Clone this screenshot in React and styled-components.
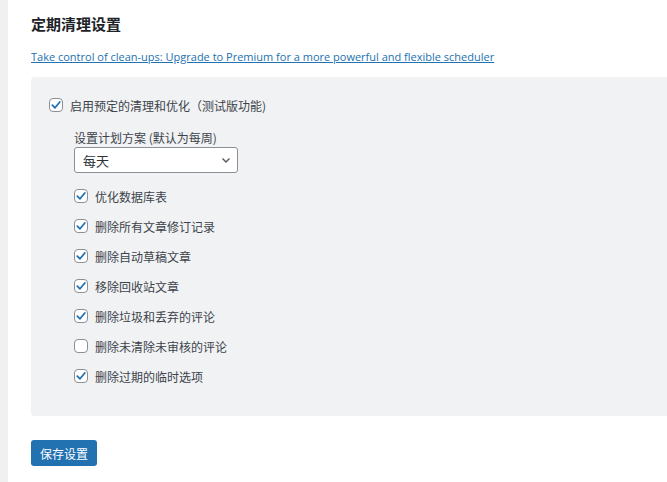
import React from 'react';
import styled, { createGlobalStyle } from 'styled-components';

const Global = createGlobalStyle`
  body {
    margin: 0;
    background: #fff;
    font-family: "Open Sans", "Noto Sans CJK SC", sans-serif;
    color: #3c434a;
  }
`;

const Page = styled.div`
  display: flex;
  min-height: 482px;
  width: 667px;
  overflow: hidden;
`;

const Strip = styled.div`
  width: 8px;
  flex-shrink: 0;
  background: #f0f0f1;
`;

const Content = styled.div`
  flex: 1;
  padding: 13px 0 0 23px;
`;

const Title = styled.h2`
  margin: 0;
  font-size: 15px;
  font-weight: 700;
  color: #1d2327;
  line-height: 22px;
  font-family: "Noto Sans CJK SC", sans-serif;
`;

const Upgrade = styled.a`
  display: inline-block;
  margin-top: 13px;
  font-size: 11px;
  line-height: 18px;
  color: #2271b1;
  text-decoration: underline;
  font-family: "Open Sans", sans-serif;
`;

const Panel = styled.div`
  margin-top: 11px;
  width: 700px;
  height: 339px;
  box-sizing: border-box;
  background: #f1f2f4;
  border-radius: 4px 0 0 4px;
  padding: 20px 0 0 18px;
`;

const Row = styled.label`
  display: flex;
  align-items: center;
  gap: 7px;
  height: ${p => p.$h || 30}px;
  font-size: 12px;
  color: #3c434a;
  font-family: "Noto Sans CJK SC", sans-serif;
`;

const Box = styled.span`
  width: 14px;
  height: 14px;
  box-sizing: border-box;
  border: 1px solid #8c8f94;
  border-radius: 4px;
  background: #fff;
  display: flex;
  align-items: center;
  justify-content: center;
  flex-shrink: 0;
`;

const Sub = styled.div`
  padding-left: 25px;
  margin-top: 18px;
`;

const FieldLabel = styled.div`
  font-size: 12px;
  line-height: 14px;
  color: #3c434a;
  font-family: "Noto Sans CJK SC", sans-serif;
`;

const Select = styled.div`
  margin-top: 2px;
  margin-bottom: 8px;
  width: 164px;
  height: 26px;
  box-sizing: border-box;
  border: 1px solid #8c8f94;
  border-radius: 3px;
  background: #fff;
  display: flex;
  align-items: center;
  justify-content: space-between;
  padding: 0 5px 0 8px;
  font-size: 13px;
  color: #2c3338;
  font-family: "Noto Sans CJK SC", sans-serif;
`;

const SaveButton = styled.button`
  margin-top: 24px;
  height: 26px;
  padding: 0 9px;
  border: none;
  border-radius: 3px;
  background: #2271b1;
  color: #fff;
  font-size: 12px;
  font-family: "Noto Sans CJK SC", sans-serif;
`;

const Check = ({ on }) => (
  <Box>
    {on && (
      <svg width="12" height="12" viewBox="0 0 12 12">
        <path d="M2.3 6.2 L5 8.8 L9.8 3" fill="none" stroke="#2271b1" strokeWidth="1.8" strokeLinecap="round" strokeLinejoin="round" />
      </svg>
    )}
  </Box>
);

const options = [
  ['优化数据库表', true],
  ['删除所有文章修订记录', true],
  ['删除自动草稿文章', true],
  ['移除回收站文章', true],
  ['删除垃圾和丢弃的评论', true],
  ['删除未清除未审核的评论', false],
  ['删除过期的临时选项', true],
];

export default function App() {
  return (
    <>
      <Global />
      <Page>
        <Strip />
        <Content>
          <Title>定期清理设置</Title>
          <Upgrade href="#">Take control of clean-ups: Upgrade to Premium for a more powerful and flexible scheduler</Upgrade>
          <Panel>
            <Row $h={16}>
              <Check on />
              启用预定的清理和优化（测试版功能)
            </Row>
            <Sub>
              <FieldLabel>设置计划方案 (默认为每周)</FieldLabel>
              <Select>
                每天
                <svg width="12" height="12" viewBox="0 0 12 12">
                  <path d="M2.5 4.5 L6 8 L9.5 4.5" fill="none" stroke="#50575e" strokeWidth="1.4" />
                </svg>
              </Select>
              {options.map(([t, on]) => (
                <Row key={t}>
                  <Check on={on} />
                  {t}
                </Row>
              ))}
            </Sub>
          </Panel>
          <SaveButton>保存设置</SaveButton>
        </Content>
      </Page>
    </>
  );
}
